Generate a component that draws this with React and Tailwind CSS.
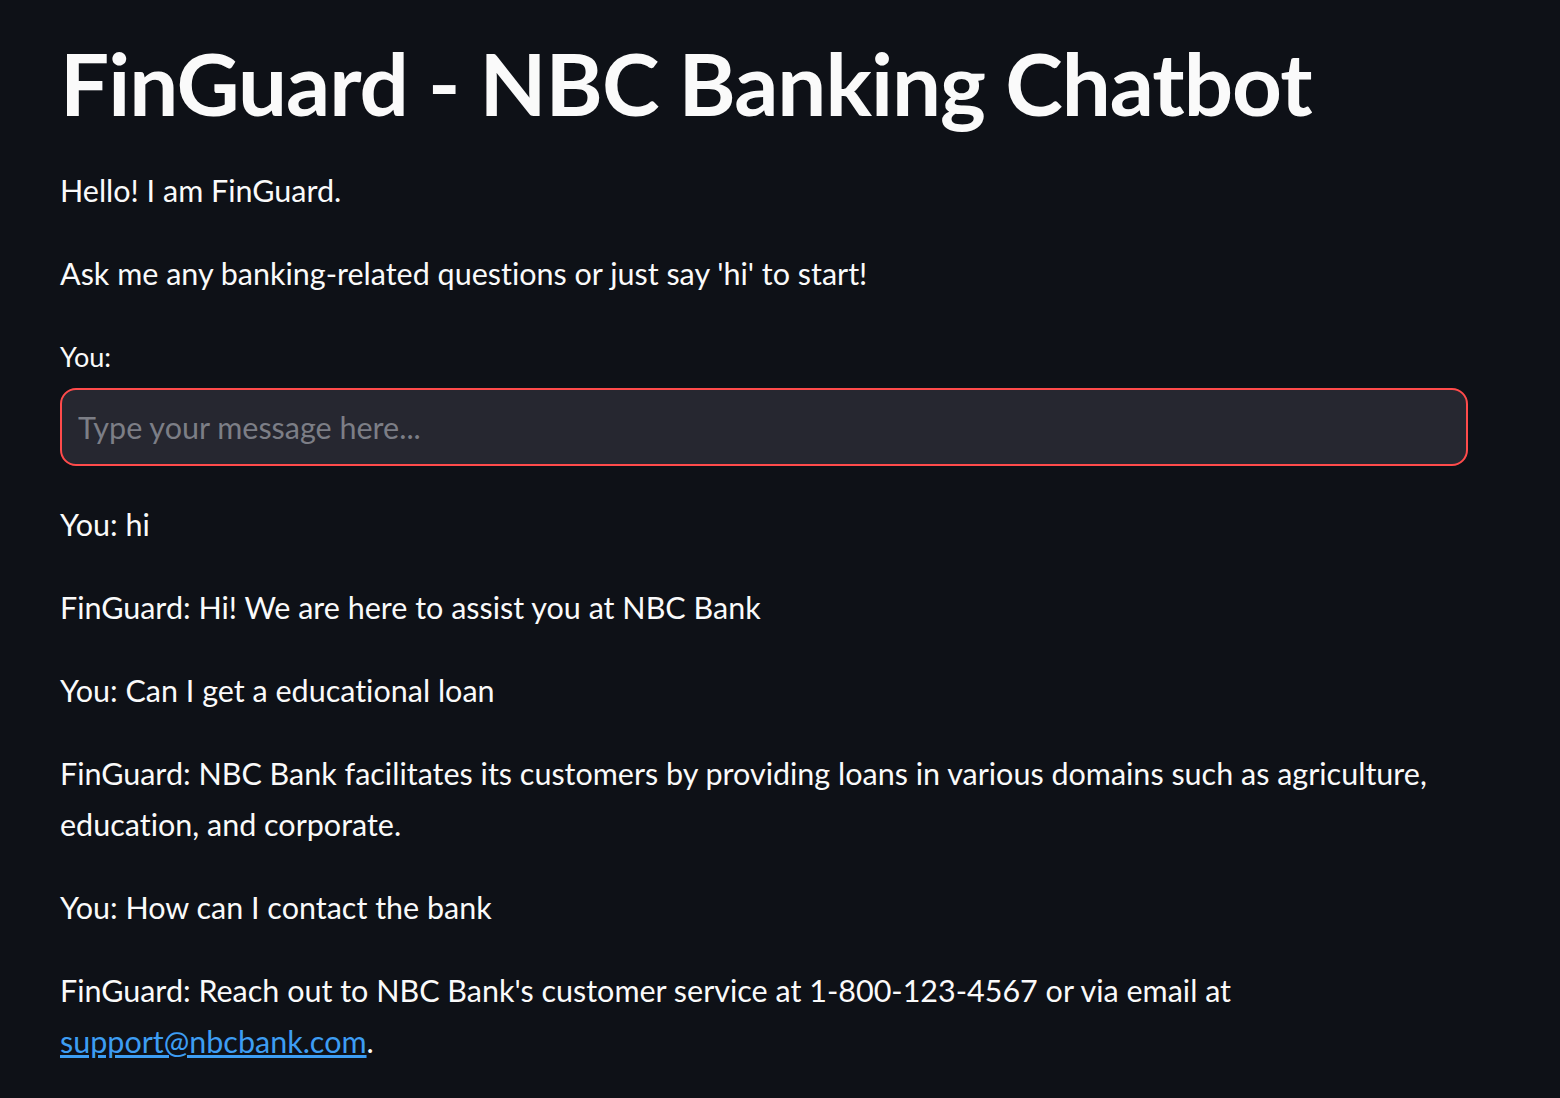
import { useState } from 'react'

const messages = [
  { who: 'You', text: 'hi' },
  { who: 'FinGuard', text: 'Hi! We are here to assist you at NBC Bank' },
  { who: 'You', text: 'Can I get a educational loan' },
  {
    who: 'FinGuard',
    text: 'NBC Bank facilitates its customers by providing loans in various domains such as agriculture, education, and corporate.',
  },
  { who: 'You', text: 'How can I contact the bank' },
]

function App() {
  const [value, setValue] = useState('')

  return (
    <div className="min-h-[1098px] w-full bg-[#0e1117] font-['Lato','Liberation_Sans',sans-serif] text-[#fafafa] [font-variant-ligatures:none]">
      <main className="w-[1408px] pl-[60px] pt-[30px]">
        <h1 className="m-0 mb-[29px] text-[87px] font-bold leading-[106px] tracking-[-1px]">FinGuard - NBC Banking Chatbot</h1>

        <p className="mb-[32px] text-[30.5px] leading-[51px]">Hello! I am FinGuard.</p>
        <p className="mb-[38px] text-[30.5px] leading-[51px]">Ask me any banking-related questions or just say 'hi' to start!</p>

        <label className="block">
          <span className="mb-[11px] block text-[27px] leading-[40px]">You:</span>
          <input
            type="text"
            value={value}
            onChange={(e) => setValue(e.target.value)}
            placeholder="Type your message here..."
            className="h-[78px] w-[1408px] rounded-[16px] border-2 border-[#ff4b4b] bg-[#262730] px-[16px] text-[30.5px] text-[#fafafa] outline-none placeholder:text-[#7c7e86]"
          />
        </label>

        <div className="mt-[33px]">
          {messages.map((m, i) => (
            <p key={i} className="mb-[32px] w-[1400px] text-[30.5px] leading-[51px]">
              {m.who}: {m.text}
            </p>
          ))}
          <p className="w-[1400px] text-[30.5px] leading-[51px]">
            FinGuard: Reach out to NBC Bank's customer service at 1-800-123-4567 or via email at{' '}
            <a href="#" className="text-[#3d9df3] underline">
              support@nbcbank.com
            </a>
            .
          </p>
        </div>
      </main>
    </div>
  )
}

export default App
